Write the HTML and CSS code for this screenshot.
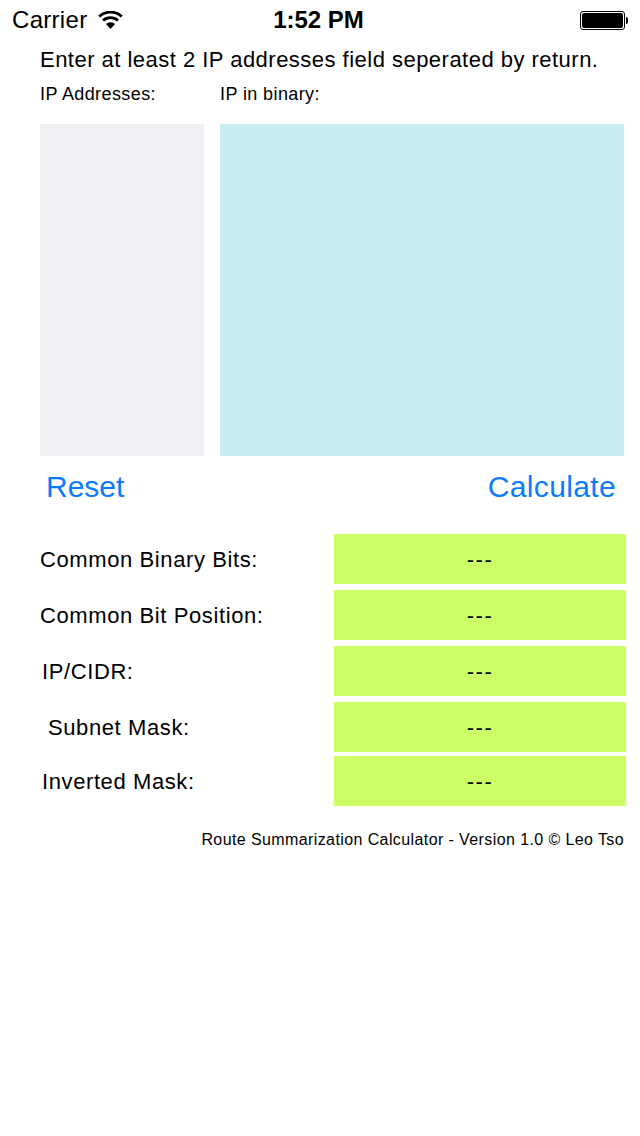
FILE: index.html
```html
<!DOCTYPE html>
<html lang="en">
<head>
  <meta charset="UTF-8">
  <title>Route Summarization Calculator</title>
  <link rel="stylesheet" href="styles.css">
</head>
<body>
  <div class="status-bar">
    <div class="status-left">
      <span>Carrier</span>
      <svg class="wifi" width="25" height="18" viewBox="0 0 25 18">
        <path d="M12.5 18 L8 13 A6.6 6.6 0 0 1 17 13 Z" fill="#000"/>
        <path d="M5 9.6 A11 11 0 0 1 20 9.6" fill="none" stroke="#000" stroke-width="2.8"/>
        <path d="M1.2 5.6 A16.4 16.4 0 0 1 23.8 5.6" fill="none" stroke="#000" stroke-width="2.8"/>
      </svg>
    </div>
    <div class="status-time">1:52 PM</div>
    <div class="battery"><div class="battery-fill"></div></div>
  </div>

  <div class="content">
    <p class="hint">Enter at least 2 IP addresses field seperated by return.</p>
    <div class="panel-labels">
      <span class="left-col">IP Addresses:</span>
      <span>IP in binary:</span>
    </div>
    <div class="panels">
      <div class="panel-ip left-col"></div>
      <div class="panel-binary"></div>
    </div>
    <div class="actions">
      <button class="btn-reset">Reset</button>
      <button class="btn-calculate">Calculate</button>
    </div>

    <div class="results">
      <div class="result-row"><span class="result-label">Common Binary Bits:</span><div class="result-value">---</div></div>
      <div class="result-row"><span class="result-label">Common Bit Position:</span><div class="result-value">---</div></div>
      <div class="result-row"><span class="result-label indent-small">IP/CIDR:</span><div class="result-value">---</div></div>
      <div class="result-row"><span class="result-label indent-large">Subnet Mask:</span><div class="result-value">---</div></div>
      <div class="result-row last"><span class="result-label indent-small">Inverted Mask:</span><div class="result-value">---</div></div>
    </div>

    <p class="footer">Route Summarization Calculator - Version 1.0 © Leo Tso</p>
  </div>
</body>
</html>
```

FILE: styles.css
```css
body {
  margin: 0;
  background: #fff;
  color: #000;
  font-family: "Liberation Sans", Arial, sans-serif;
}

/* Status bar */
.status-bar {
  height: 40px;
  display: grid;
  grid-template-columns: 1fr auto 1fr;
  align-items: center;
  padding: 0 15px 0 12px;
  font-size: 24px;
}

.status-left {
  display: flex;
  align-items: center;
  gap: 11px;
  letter-spacing: 0.3px;
}

.status-time {
  font-weight: bold;
}

.battery {
  justify-self: end;
  position: relative;
  width: 45px;
  height: 19px;
  box-sizing: border-box;
  border: 1px solid #000;
  border-radius: 3px;
  padding: 1px;
}

.battery::after {
  content: "";
  position: absolute;
  right: -4px;
  top: 5px;
  width: 2px;
  height: 7px;
  background: #000;
  border-radius: 0 2px 2px 0;
}

.battery-fill {
  height: 100%;
  background: #000;
  border-radius: 2px;
}

/* Main content */
.content {
  padding-left: 40px;
}

.hint {
  margin: 0;
  height: 40px;
  line-height: 40px;
  font-size: 22px;
  letter-spacing: 0.48px;
}

.panel-labels {
  display: flex;
  height: 28px;
  line-height: 28px;
  font-size: 18px;
  letter-spacing: 0.4px;
}

.left-col {
  width: 164px;
  margin-right: 16px;
  flex: none;
}

.panels {
  display: flex;
  height: 332px;
  margin-top: 16px;
}

.panel-ip {
  background: #efeff4;
}

.panel-binary {
  width: 404px;
  background: #c7edf3;
}

.actions {
  display: flex;
  justify-content: space-between;
  height: 78px;
  padding: 0 8px 0 6px;
  width: 570px;
}

.actions button {
  height: 62px;
  padding: 0;
  border: 0;
  background: none;
  color: #0a7aff;
  font: 30px "Liberation Sans", Arial, sans-serif;
}

.actions .btn-calculate {
  letter-spacing: 0.35px;
}

/* Results */
.result-row {
  display: flex;
  align-items: center;
  justify-content: space-between;
  height: 50px;
  margin-bottom: 6px;
  width: 586px;
  font-size: 22px;
  letter-spacing: 0.6px;
}

.result-row.last {
  margin-top: -2px;
}

.result-label {
  padding-top: 2px;
}

.indent-small {
  margin-left: 2px;
}

.indent-large {
  margin-left: 8px;
}

.result-value {
  width: 292px;
  height: 50px;
  line-height: 52px;
  background: #ccff66;
  text-align: center;
  letter-spacing: 1.5px;
}

.footer {
  margin: 25px 16px 0 0;
  text-align: right;
  font-size: 16px;
  letter-spacing: 0.4px;
}
```
